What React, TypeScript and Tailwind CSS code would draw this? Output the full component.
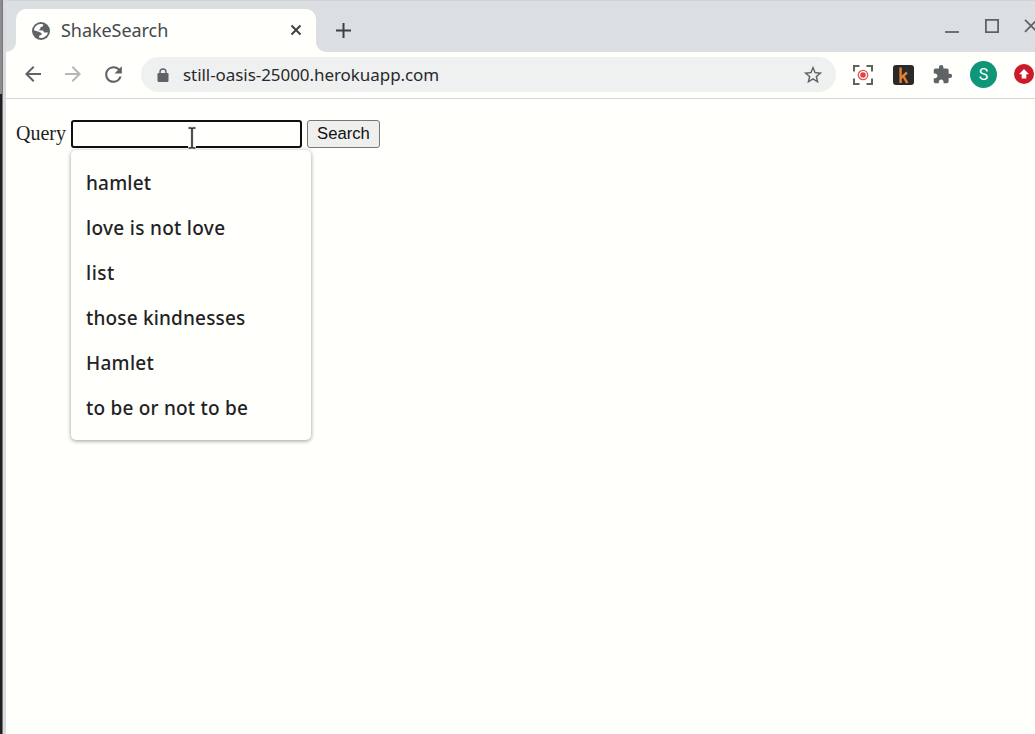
import { MdExtension, MdArrowBack, MdArrowForward, MdRefresh, MdStarBorder } from "react-icons/md";

const suggestions = [
  { text: "hamlet", spacing: "tracking-[0.2px]" },
  { text: "love is not love", spacing: "tracking-[0.3px]" },
  { text: "list", spacing: "tracking-[0.5px]" },
  { text: "those kindnesses", spacing: "tracking-[0.17px]" },
  { text: "Hamlet", spacing: "tracking-[0.27px]" },
  { text: "to be or not to be", spacing: "tracking-[0.21px]" },
];

function Globe() {
  return (
    <svg width="18" height="18" viewBox="0 0 18 18" className="shrink-0">
      <circle cx="9" cy="9" r="9" fill="#5f6368" />
      <path d="M2 8.2 C2.4 4.8 5 2.3 8.2 2 L11.3 2.2 L11 4.3 L8.5 5.2 L8.2 7 L6.4 8.2 L11 8.4 L12.2 10.6 L16 10.6 C15.2 13.8 12.6 15.9 9.4 16 L7.2 15.7 L7.1 13.7 L9.6 12.8 L9.5 11 L7.3 9.9 Z" fill="#fffffc" />
    </svg>
  );
}

function TabStrip() {
  return (
    <header className="flex h-[52px] bg-[#dcdfe2] border-t border-[#d0d4d7] text-[#5f6368]">
      <div className="flex w-[10px] items-end bg-[#fffffc]">
        <div className="h-full w-[10px] rounded-br-[10px] bg-[#dcdfe2]" />
      </div>
      <div className="mt-2 flex w-[300px] items-center rounded-t-[10px] bg-[#fffffc] pl-4 pr-[14px]">
        <Globe />
        <span className="-mt-[2px] ml-[11px] flex-1 font-['Noto_Sans',sans-serif] text-[18px] leading-6 tracking-[-0.05px] text-[#45484d]">ShakeSearch</span>
        <svg width="12" height="12" viewBox="0 0 12 12" className="-mt-px"><path d="M1.5 1.5 10.5 10.5M10.5 1.5 1.5 10.5" stroke="#3c4043" strokeWidth="1.9" /></svg>
      </div>
      <div className="flex-1 bg-[#fffffc]">
        <div className="flex h-full items-center rounded-bl-[10px] bg-[#dcdfe2] pl-5">
          <svg width="15" height="15" viewBox="0 0 15 15" className="mt-2"><path d="M7.5 0V15M0 7.5H15" stroke="#3c4043" strokeWidth="2" /></svg>
          <svg width="90" height="14" viewBox="0 0 90 14" fill="none" stroke="#5f6368" className="ml-auto -mt-[2px]">
            <path d="M0 13H14" strokeWidth="1.8" />
            <path d="M40.9 .9H53.1V13.1H40.9Z" strokeWidth="1.8" />
            <path d="M80 .8 92 12.8M92 .8 80 12.8" strokeWidth="1.8" />
          </svg>
        </div>
      </div>
    </header>
  );
}

function Toolbar() {
  return (
    <nav className="flex h-[47px] items-center border-b border-[#d3d4dc] bg-[#fffffc] pl-[15px] pb-[1px] text-[#5f6368]">
      <MdArrowBack size={24} className="-mt-[2px]" />
      <MdArrowForward size={24} className="ml-4 -mt-[2px] text-[#b4b6b8]" />
      <MdRefresh size={25} className="ml-4 -mt-px" />
      <div className="ml-[15px] flex h-[35px] w-[695px] items-center rounded-full bg-[#eff1f0] pl-4 pr-3">
        <svg width="12" height="14" viewBox="0 0 12 14">
          <path d="M3 6V4A3 3 0 0 1 9 4V6" fill="none" stroke="#5f6368" strokeWidth="1.4" />
          <rect x=".5" y="5" width="11" height="9" rx="1.2" fill="#5f6368" />
        </svg>
        <span className="ml-[14px] flex-1 font-['Noto_Sans',sans-serif] text-[17px] leading-6 tracking-[-0.06px] text-[#29292b]">still-oasis-25000.herokuapp.com</span>
        <MdStarBorder size={22} />
      </div>
      <svg width="20" height="20" viewBox="0 0 20 20" fill="none" className="ml-[17px] shrink-0">
        <path d="M1 6.5V1H6.5M13.5 1H19V6.5M19 13.5V19H13.5M6.5 19H1V13.5" stroke="#5f6368" strokeWidth="2" />
        <circle cx="10" cy="10" r="4.7" stroke="#df5352" strokeWidth="1.3" />
        <circle cx="10" cy="10" r="2.8" fill="#df4544" />
      </svg>
      <svg width="21" height="20" viewBox="0 0 21 20" className="ml-5 shrink-0">
        <rect width="21" height="20" rx="3" fill="#2b2a2b" />
        <path d="M7.6 2.5V18M14 7.5 8 12.8M10.3 11 14.2 18" fill="none" stroke="#e5812f" strokeWidth="2.4" />
      </svg>
      <MdExtension size={21} className="ml-[18px] -mt-px shrink-0" />
      <div className="ml-[17px] flex size-[27px] shrink-0 items-center justify-center rounded-full bg-[#0f9578] font-['Roboto',sans-serif] text-[16px] leading-none text-white"><span className="pt-px">S</span></div>
      <svg width="20" height="20" viewBox="0 0 20 20" className="ml-[17px] -mt-px shrink-0">
        <circle cx="10" cy="10" r="10" fill="#cb1b2b" />
        <path d="M10 5 15 10.2H12.3V14.5H7.7V10.2H5Z" fill="white" />
      </svg>
    </nav>
  );
}

function Suggestions() {
  return (
    <ul className="absolute left-0 top-[30px] z-10 w-[240px] rounded-[5px] bg-[#fffffc] pt-[11px] pb-[9px] font-['Noto_Sans',sans-serif] text-[19px] font-medium text-[#232225] shadow-[0_1px_4px_rgba(0,0,0,0.4)]">
      {suggestions.map((item) => (
        <li key={item.text} className="flex h-[45px] items-center whitespace-nowrap pl-[15px]">
          <span className={item.spacing}>{item.text}</span>
        </li>
      ))}
    </ul>
  );
}

export default function App() {
  return (
    <div className="flex h-[734px] w-[1035px] overflow-hidden bg-[#fffffc]">
      <div className="flex w-[6px] shrink-0 bg-[#d9dbe0]">
        <div className="w-[2px] bg-[#8c8c8c]"><div className="mt-[94px] h-[640px] bg-[#231f20]" /></div>
        <div className="w-px bg-[#777779]" />
      </div>
      <div className="min-w-0 flex-1">
        <TabStrip />
        <Toolbar />
        <main className="flex pl-[10px] pt-[21px]">
          <label htmlFor="query" className="w-[55px] font-['Liberation_Serif',serif] text-[20px] leading-[26px] text-[#222]">Query</label>
          <div className="relative h-7 w-[231px]">
            <input id="query" className="block h-7 w-full rounded-[3px] border-2 border-[#101012] bg-[#fffffc] outline-none" />
            <svg width="10" height="24" viewBox="0 0 10 24" fill="none" className="absolute left-[116px] top-[6px] z-20">
              <path d="M1 2H4L5 3 6 2H9M5 3V21M1 22H4L5 21 6 22H9" stroke="#eeeeec" strokeWidth="4" />
              <path d="M1.5 2H4L5 3 6 2H8.5M5 3V21M1.5 22H4L5 21 6 22H8.5" stroke="#333" strokeWidth="1.7" />
            </svg>
            <Suggestions />
          </div>
          <button className="ml-[5px] h-7 w-[73px] rounded-[3px] border border-[#777] bg-[#efefee] font-['Liberation_Sans',sans-serif] text-[16.67px] leading-6 text-[#111]">Search</button>
        </main>
      </div>
    </div>
  );
}
